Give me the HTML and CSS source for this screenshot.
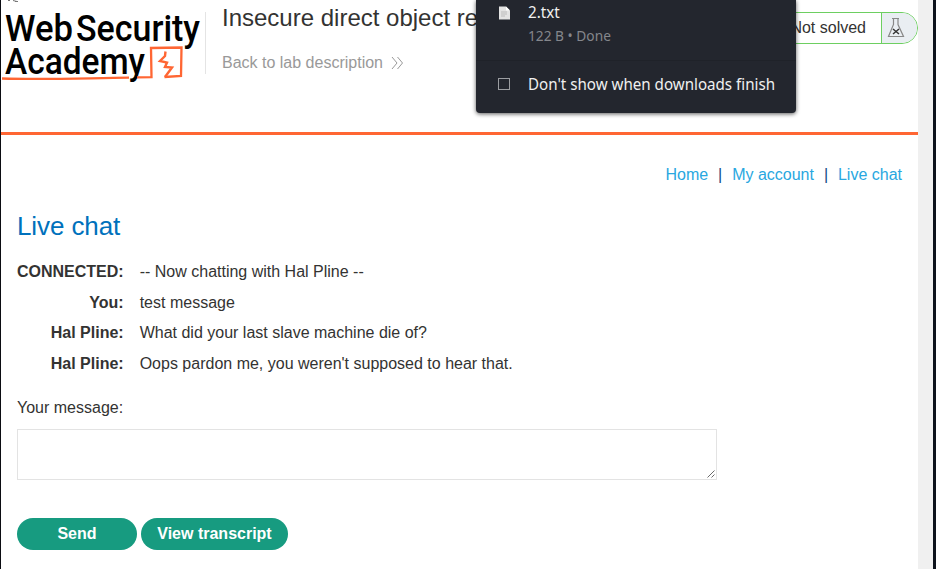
FILE: index.html
```html
<!DOCTYPE html>
<html lang="en">
<head>
<meta charset="utf-8">
<title>Live chat</title>
<link rel="stylesheet" href="styles.css">
</head>
<body>
<div class="window">
  <div class="page">
    <header class="header">
      <svg class="logo" width="204" height="90" viewBox="0 0 204 90" role="img">
        <path class="speck" d="M8 .5h2M13 .5l4 1M15 1.500h3"/>
        <g class="logo-text">
          <text x="5" y="41" textLength="68" lengthAdjust="spacingAndGlyphs">Web</text>
          <text x="76" y="41" textLength="124" lengthAdjust="spacingAndGlyphs">Security</text>
          <text x="5" y="73.500" textLength="140" lengthAdjust="spacingAndGlyphs">Academy</text>
        </g>
        <path class="logo-line" d="M2 78.500C45 80 90 78 129 77.700M137 77.300L151.500 77.200L151 48L181.500 47.500L181 76L164.500 77"/>
        <path class="logo-bolt" d="M165.500 51.500L165 56L160 61L167 62.500L165 67L172 67.500L165 77"/>
      </svg>
      <div class="titles">
        <h2>Insecure direct object re</h2>
        <a class="back">Back to lab description
          <svg width="13" height="14" viewBox="0 0 13 14"><path d="M1 1l5 6-5 6M6.500 1l5 6-5 6"/></svg>
        </a>
      </div>
      <div class="status">
        <span class="status-text">Not solved</span>
        <span class="status-icon">
          <svg width="18" height="21" viewBox="0 0 18 21"><path class="flask" d="M5 1.500h7M6.500 1.500v6L1.500 19.500h15L11 7.500v-6"/><path class="cross" d="M6 12l6 5M12 12l-6 5"/></svg>
        </span>
      </div>
    </header>
    <main>
      <nav><a>Home</a><i>|</i><a>My account</a><i>|</i><a>Live chat</a></nav>
      <h1>Live chat</h1>
      <table>
        <tr><th>CONNECTED:</th><td>-- Now chatting with Hal Pline --</td></tr>
        <tr><th>You:</th><td>test message</td></tr>
        <tr><th>Hal Pline:</th><td>What did your last slave machine die of?</td></tr>
        <tr><th>Hal Pline:</th><td>Oops pardon me, you weren't supposed to hear that.</td></tr>
      </table>
      <label>Your message:</label>
      <div class="message">
        <svg width="8" height="8" viewBox="0 0 8 8"><path d="M.5 7.500l7-7M4.500 7.500l3-3"/></svg>
      </div>
      <div class="buttons"><button class="send">Send</button><button class="transcript">View transcript</button></div>
    </main>
  </div>
  <div class="scrollbar"></div>
</div>
<aside class="downloads">
  <div class="file">
    <svg class="file-icon" width="11" height="14" viewBox="0 0 11 14"><path class="sheet" d="M0 .5h7l4 4v9H0z"/><path class="fold" d="M7 .5v4h4z"/><path class="lines" d="M2 6h6M2 8h6M2 10h4"/></svg>
    <div><div class="name">2.txt</div><div class="detail">122 B • Done</div></div>
  </div>
  <div class="option"><span class="checkbox"></span><span class="option-text">Don't show when downloads finish</span></div>
</aside>
</body>
</html>
```
FILE: styles.css
```css
* { box-sizing: border-box; }
body { margin: 0; overflow: hidden; font: 16px/20px "Liberation Sans", Arial, sans-serif; color: #333332; background: #fff; }
.window { display: flex; height: 569px; border-left: 1px solid #0b0c12; border-right: 3px solid #0d121c; }
.page { width: 917px; flex: none; background: #fff; }
.scrollbar { flex: 1; background: #f0f0f0; }
.header { display: flex; height: 135px; border-bottom: 3px solid #ff6633; }
.logo { flex: none; margin-left: -1px; }
.logo-text { font-family: Roboto, sans-serif; font-size: 37px; font-weight: 500; fill: #000; }
.logo path { fill: none; }
.speck { stroke: #777; }
.logo-line { stroke: #ff6633; stroke-width: 2.3; }
.logo-bolt { stroke: #ff6633; stroke-width: 2.4; }
.titles { margin-top: 12px; height: 62px; margin-left: 1px; padding-left: 16px; border-left: 1px solid #e4e4e4; width: 530px; white-space: nowrap; }
h2 { margin: -8px 0 0; font-size: 24px; line-height: 28px; font-weight: 400; }
.back { display: flex; align-items: center; gap: 8px; margin-top: 21px; color: #999; }
.back svg { fill: none; stroke: #999; stroke-width: 1; }
.status { display: flex; margin: 12px 0 0 auto; width: 180px; height: 32px; border: 1px solid #6dcf61; border-radius: 16px; overflow: hidden; }
.status-text { flex: 1; padding-right: 15px; text-align: right; line-height: 30px; }
.status-icon { width: 36px; padding: 4px 0 0 5px; border-left: 1px solid #6dcf61; background: #e9eef2; }
.status-icon svg { display: block; fill: none; }
.flask { stroke: #888; stroke-width: 1.2; }
.cross { stroke: #333; stroke-width: 1.5; }
main { padding: 30px 16px 0; }
nav { display: flex; justify-content: flex-end; color: #29a7df; }
nav i { width: 24px; text-align: center; font-style: normal; color: #0f4c81; }
h1 { margin: 25px 0 20px; font-size: 26px; line-height: 32px; font-weight: 400; color: #0071bc; letter-spacing: -.1px; }
table { border-collapse: collapse; margin-bottom: 19px; }
th, td { padding: 0; height: 30.67px; line-height: 20px; vertical-align: top; }
th { width: 107px; text-align: right; padding-right: 1px; }
td { padding-left: 15px; }
label { display: block; margin-top: -6px; }
.message { display: flex; align-items: flex-end; justify-content: flex-end; width: 700px; height: 51px; margin-top: 11px; padding: 1px; border: 1px solid #e3e3e3; }
.message svg { fill: none; stroke: #444; stroke-width: .8; }
.buttons { display: flex; gap: 4px; margin-top: 38px; }
button { height: 32px; padding: 0; border: 0; border-radius: 16px; color: #fff; background: #179b80; font: bold 16px/32px "Liberation Sans", Arial, sans-serif; }
.send { width: 120px; }
.transcript { width: 147px; }
.downloads { position: absolute; top: 0; left: 476px; width: 320px; height: 113px; border-radius: 0 0 4px 4px; background: #23262e; box-shadow: 0 1px 4px rgba(0,0,0,.65); color: #f0f0f0; font-family: "Noto Sans", sans-serif; white-space: nowrap; }
.file { display: flex; height: 61px; padding-left: 23px; border-bottom: 1px solid #1f2229; }
.file-icon { margin: 6px 18px 0 0; }
.sheet { fill: #e3e3e3; }
.fold { fill: #fff; }
.lines { stroke: #bbb; }
.name { height: 24px; line-height: 24px; transform: scaleX(.95); transform-origin: left; }
.detail { font-size: 15px; line-height: 22px; color: #85878c; transform: scaleX(.915); transform-origin: left; }
.option { display: flex; align-items: center; height: 46px; padding-left: 22px; }
.option-text { transform: scaleX(.946); transform-origin: left; }
.checkbox { width: 12px; height: 12px; margin-right: 18px; border: 1px solid #9b9da1; }
```
